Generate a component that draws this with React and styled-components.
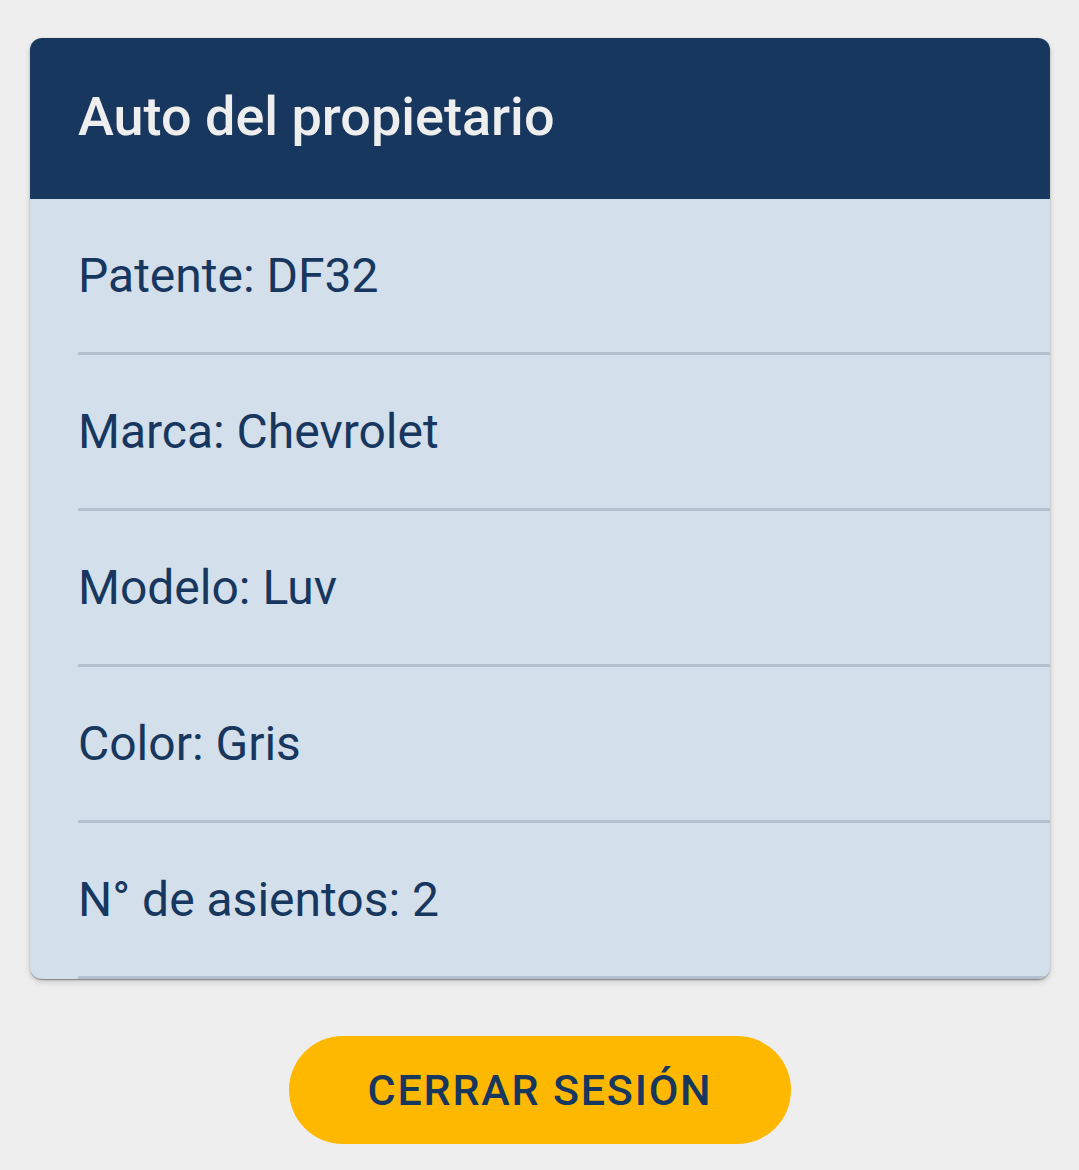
import React from "react";
import styled, { createGlobalStyle } from "styled-components";

const NAVY = "#17375f";

const carInfo = [
  { label: "Patente", value: "DF32" },
  { label: "Marca", value: "Chevrolet" },
  { label: "Modelo", value: "Luv" },
  { label: "Color", value: "Gris" },
  { label: "N° de asientos", value: "2" },
];

function App() {
  return (
    <>
      <GlobalStyle />
      <Page>
        <Card>
          <CardHeader>
            <Title>Auto del propietario</Title>
          </CardHeader>
          <List>
            {carInfo.map((item) => (
              <Row key={item.label}>
                <RowText>
                  {item.label}: {item.value}
                </RowText>
              </Row>
            ))}
          </List>
        </Card>
        <LogoutButton type="button">Cerrar sesión</LogoutButton>
      </Page>
    </>
  );
}

const GlobalStyle = createGlobalStyle`
  body {
    margin: 0;
    background-color: #eeeeee;
    font-family: Roboto, "Liberation Sans", sans-serif;
  }
`;

const Page = styled.div`
  display: flex;
  flex-direction: column;
  align-items: center;
  padding: 38px 29px 40px 30px;
`;

const Card = styled.div`
  align-self: stretch;
  background-color: #d3dfea;
  border-radius: 12px;
  overflow: hidden;
  box-shadow: 0px 2px 1px -1px rgba(0, 0, 0, 0.2),
    0px 1px 1px 0px rgba(0, 0, 0, 0.14), 0px 1px 3px 0px rgba(0, 0, 0, 0.12),
    0px 3px 6px rgba(0, 0, 0, 0.14);
`;

const CardHeader = styled.div`
  display: flex;
  align-items: center;
  height: 161px;
  padding: 0 48px 2px 48px;
  box-sizing: border-box;
  background-color: ${NAVY};
`;

const Title = styled.h2`
  margin: 0;
  font-size: 54px;
  font-weight: 500;
  line-height: 1.6;
  color: #eeeeee;
`;

const List = styled.div`
  display: flex;
  flex-direction: column;
  padding-left: 48px;
`;

const Row = styled.div`
  display: flex;
  align-items: center;
  height: 156px;
  padding-top: 1px;
  box-sizing: border-box;
  border-bottom: 3px solid #b5c1cf;
`;

const RowText = styled.span`
  font-size: 48px;
  line-height: 72px;
  font-weight: 400;
  color: ${NAVY};
`;

const LogoutButton = styled.button`
  margin-top: 57px;
  width: 502px;
  height: 108px;
  border: none;
  border-radius: 54px;
  background-color: #ffb800;
  color: ${NAVY};
  font-family: Roboto, "Liberation Sans", sans-serif;
  font-size: 43px;
  font-weight: 500;
  letter-spacing: 1.8px;
  text-transform: uppercase;
  cursor: pointer;
`;

export default App;
